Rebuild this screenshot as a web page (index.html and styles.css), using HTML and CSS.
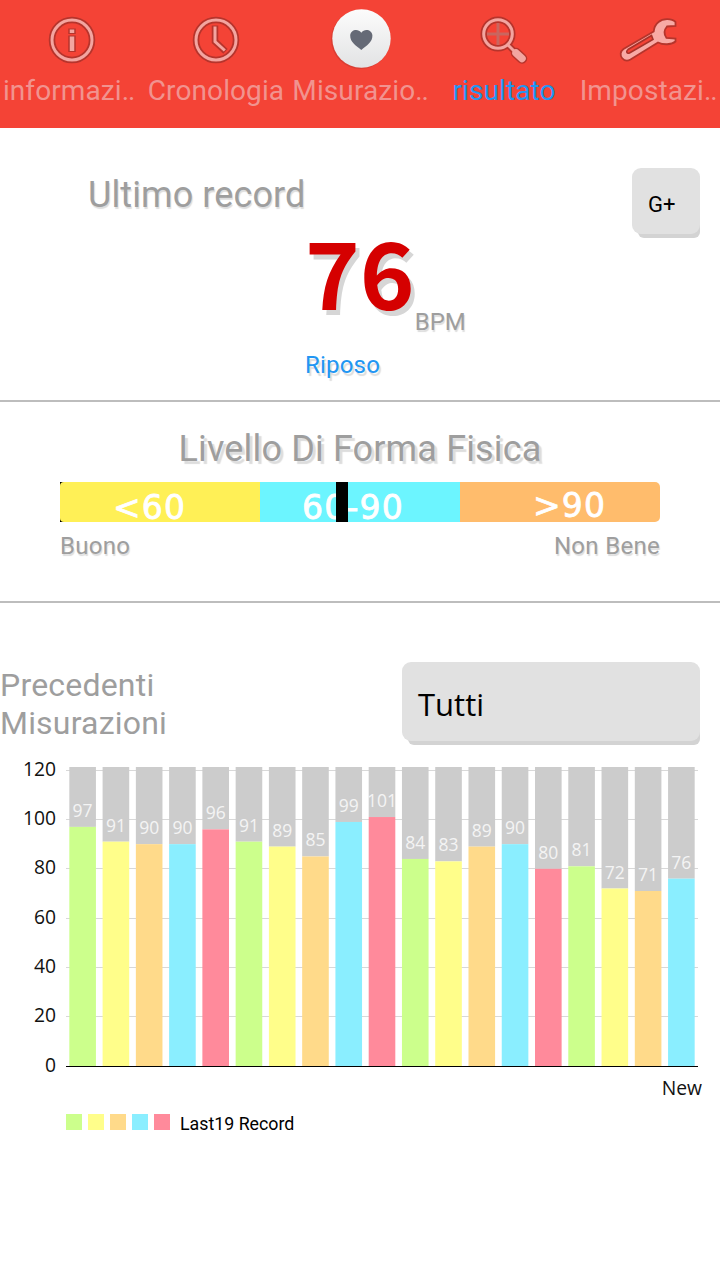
FILE: index.html
```
<!DOCTYPE html>
<html lang="it">
<head>
  <meta charset="UTF-8">
  <meta name="viewport" content="width=device-width, initial-scale=1.0">
  <title>Risultato</title>
  <link rel="stylesheet" href="styles.css">
</head>
<body>
  <nav class="tabs">
    <a class="tab">
      <svg class="icon" width="64" height="64" viewBox="0 0 64 64">
        <g class="edge"><circle cx="32" cy="32" r="20"/><path class="thick" d="M32 20.500v5.500M32 27.500v16.500"/></g>
        <g class="line"><circle cx="32" cy="32" r="20"/><path class="thick" d="M32 21.500v3.400M32 28.500v14.500"/></g>
      </svg>
      <span class="label first">informazi<span class="dots">..</span></span>
    </a>
    <a class="tab">
      <svg class="icon" width="64" height="64" viewBox="0 0 64 64">
        <g class="edge"><circle cx="32" cy="32" r="20"/><path d="M31 17.500v16l10.500 9.800"/></g>
        <g class="line"><circle cx="32" cy="32" r="20"/><path d="M31 18.500v15l9.800 9"/></g>
      </svg>
      <span class="label">Cronologia</span>
    </a>
    <a class="tab">
      <svg class="icon" width="64" height="64" viewBox="0 0 64 64">
        <defs>
          <linearGradient id="disc" x1="0" y1="0" x2="0" y2="1">
            <stop offset="0" stop-color="#fcfcfc"/>
            <stop offset="1" stop-color="#e2e3e4"/>
          </linearGradient>
        </defs>
        <circle cx="32.500" cy="31.500" r="29.500" fill="#c93a30" opacity=".6"/>
        <circle cx="33.500" cy="30.500" r="29.200" fill="url(#disc)"/>
        <path d="M33.300 42C28 37.500 22 34 22.200 27.500c.2-5.500 7.800-7.500 11.100-2.700 3.300-4.800 10.900-2.800 11.100 2.700.2 6.500-5.800 10-11.100 14.500z" fill="#656a76"/>
      </svg>
      <span class="label">Misurazio<span class="dots">..</span></span>
    </a>
    <a class="tab active">
      <svg class="icon" width="64" height="64" viewBox="0 0 64 64">
        <g class="edge"><circle cx="26" cy="26" r="14.300"/><path d="M36 37l5 5"/><path class="handle" d="M44 45l6 5.500"/></g>
        <path class="cross" d="M26 15v22M15 26h22"/>
        <g class="line"><circle cx="26" cy="26" r="14.300"/><path d="M36 37l6 6"/><path class="handle" d="M44 45l6 5.500"/></g>
      </svg>
      <span class="label">risultato</span>
    </a>
    <a class="tab">
      <svg class="icon" width="64" height="64" viewBox="0 0 64 64">
        <path class="wrench" d="M59.500 14C56 10.500 47 10 42.500 14c-3 2.500-4.500 6-4.800 9.500L7.500 41c-3.500 2.500-3.500 6.500-1.500 9s5 3.500 8.500 1.500L42 34.500c5 2.500 13.500 2.500 17.500-1V30.500l-9-.5c-2.500-3.500-2.500-8 .5-11.500l8.500-.5z"/>
        <path class="slot" d="M35.500 27.500L12 41.500c-2.500 2-1 4.500 1.500 3.500L37 31.500z"/>
      </svg>
      <span class="label">Impostazi<span class="dots">..</span></span>
    </a>
  </nav>

  <section class="record">
    <h2 class="record-title">Ultimo record</h2>
    <button class="button share">G+</button>
    <div class="reading">
      <span class="bpm">76</span>
      <span class="unit">BPM</span>
    </div>
    <div class="state">Riposo</div>
  </section>

  <section class="fitness">
    <h2 class="fitness-title">Livello Di Forma Fisica</h2>
    <div class="gauge">
      <div class="zone low">&lt;60</div>
      <div class="zone mid">60-90</div>
      <div class="zone high">&gt;90</div>
      <div class="marker"></div>
    </div>
    <div class="scale">
      <span>Buono</span>
      <span>Non Bene</span>
    </div>
  </section>

  <section class="history">
    <div class="history-head">
      <h2 class="history-title">Precedenti<br>Misurazioni</h2>
      <button class="button filter">Tutti</button>
    </div>
    <svg id="chart" class="chart" width="720" height="356" viewBox="0 0 720 356"></svg>
    <div class="legend">
      <i class="swatch green"></i>
      <i class="swatch yellow"></i>
      <i class="swatch orange"></i>
      <i class="swatch blue"></i>
      <i class="swatch pink"></i>
      <span class="legend-text">Last19 Record</span>
    </div>
  </section>
  <script src="chart.js"></script>
</body>
</html>
```
FILE: styles.css
```
body {
  margin: 0;
  background: #fff;
  color: #9e9e9e;
  font-family: Roboto, sans-serif;
}
h2 {
  margin: 0;
  font-weight: normal;
}

/* tabs */
.tabs {
  display: flex;
  height: 128px;
  background: #f44336;
}
.tab {
  display: flex;
  flex-direction: column;
  align-items: center;
  width: 144px;
  padding-top: 8px;
  box-sizing: border-box;
  color: #f1938f;
}
.tab.active {
  color: #2196f3;
}
.label {
  font-size: 28px;
  line-height: 38px;
  letter-spacing: .1px;
  white-space: nowrap;
}
.first {
  margin-right: 7px;
}
.dots {
  letter-spacing: -1.2px;
}
.icon {
  display: block;
  fill: none;
  stroke-linecap: butt;
}
.edge {
  stroke: #9c2f28;
  stroke-width: 6.5;
  opacity: .7;
}
.line {
  stroke: #f3a5a0;
  stroke-width: 3;
}
.edge .thick {
  stroke-width: 7.5;
}
.line .thick {
  stroke-width: 4.5;
}
.edge .handle {
  stroke-width: 10.5;
  stroke-linecap: round;
}
.line .handle {
  stroke-width: 7.5;
  stroke-linecap: round;
}
.cross {
  stroke: #c9665f;
  stroke-width: 3;
}
.wrench {
  fill: #f8aaa5;
  stroke: #b5352c;
  stroke-width: 1.8;
}
.slot {
  fill: #f44336;
  stroke: #a8322a;
  stroke-width: 1.6;
}

.button {
  padding: 0 16px;
  border: 0;
  border-radius: 9px;
  background: #e1e1e1;
  box-shadow: 3px 7px 0 -3px #d3d3d3;
  color: #000;
  font-family: Roboto, sans-serif;
  text-align: left;
}

/* last record */
.record {
  display: grid;
  grid-template-columns: 305px 1fr 68px;
  grid-template-rows: 70px 110px 34px;
  height: 272px;
  padding: 40px 20px 0 0;
  box-sizing: border-box;
}
.record-title {
  grid-column: 1 / 3;
  padding-left: 88px;
  font-size: 36px;
  line-height: 55px;
  letter-spacing: .1px;
  text-shadow: 1px 2px 1px #ddd;
}
.share {
  height: 66px;
  font-size: 22px;
  padding-top: 6px;
}
.reading {
  grid-column: 2;
  display: flex;
  align-items: flex-start;
}
.bpm {
  color: #d50000;
  font-family: "Noto Sans CJK JP", sans-serif;
  font-size: 93px;
  font-weight: bold;
  line-height: 63px;
  text-shadow: 4px 5px 0 #d6d6d6;
}
.unit {
  margin-top: 68px;
  font-size: 24px;
  line-height: 32px;
  text-shadow: 1px 2px 1px #ddd;
}
.state {
  grid-column: 2;
  color: #2196f3;
  font-size: 24px;
  line-height: 34px;
  letter-spacing: .2px;
  text-shadow: 2px 3px 1px #ddd;
}

/* fitness level */
.fitness {
  height: 203px;
  padding: 25px 60px 0;
  box-sizing: border-box;
  border-top: 2px solid #bdbdbd;
  border-bottom: 2px solid #bdbdbd;
}
.fitness-title {
  font-size: 36px;
  line-height: 44px;
  letter-spacing: .15px;
  text-align: center;
  text-shadow: 3px 3px 1px #ddd;
}
.gauge {
  position: relative;
  display: flex;
  height: 40px;
  margin-top: 11px;
  background: linear-gradient(to right, #000 10px, transparent 10px);
}
.zone {
  width: 200px;
  height: 40px;
  padding-top: 11px;
  box-sizing: border-box;
  color: #fff;
  font: 33px/30px "DejaVu Sans", sans-serif;
  letter-spacing: 1.2px;
  -webkit-text-stroke: .8px #fff;
}
.low {
  padding-left: 53px;
  background: #fff056;
  border-radius: 4px 0 0 4px;
}
.mid {
  padding-left: 42px;
  background: #6cf5ff;
}
.high {
  padding-top: 9px;
  padding-left: 73px;
  background: #ffbc6c;
  border-radius: 0 5px 5px 0;
}
/* sits over the zones at the current reading */
.marker {
  position: absolute;
  top: 0;
  left: 276px;
  width: 12px;
  height: 40px;
  background: #000;
}
.scale {
  display: flex;
  justify-content: space-between;
  font-size: 24px;
  line-height: 48px;
  letter-spacing: .3px;
  text-shadow: 1px 2px 1px #ddd;
}

/* history */
.history {
  padding-top: 59px;
}
.history-head {
  display: flex;
  justify-content: space-between;
  height: 90px;
  padding-right: 20px;
}
.history-title {
  padding-top: 4px;
  font-size: 32px;
  line-height: 38px;
  letter-spacing: .2px;
}
.filter {
  width: 298px;
  height: 79px;
  font-family: "Open Sans", sans-serif;
  font-size: 31px;
  padding-top: 4px;
}
.chart {
  display: block;
}
.grid {
  stroke: #d8d8d8;
}
.axis {
  stroke: #000;
}
.axis-text {
  fill: #111;
  font: 19.3px "Open Sans", sans-serif;
}
.bar-text {
  fill: #f4f4f4;
  font: 17.5px "Open Sans", sans-serif;
  text-anchor: middle;
}
.end {
  text-anchor: end;
}
.legend {
  display: flex;
  align-items: center;
  gap: 6px;
  height: 30px;
  padding-left: 66px;
}
.swatch {
  width: 16px;
  height: 16px;
  margin-top: -2px;
}
.green { background: #ccff8c; fill: #ccff8c; }
.yellow { background: #fffe8a; fill: #fffe8a; }
.orange { background: #ffda8a; fill: #ffda8a; }
.blue { background: #8aeeff; fill: #8aeeff; }
.pink { background: #ff8a9b; fill: #ff8a9b; }
.rest { fill: #ccc; }
.legend-text {
  margin-left: 4px;
  color: #000;
  font-size: 17.8px;
}
```
FILE: chart.js
```
const values = [97, 91, 90, 90, 96, 91, 89, 85, 99, 101, 84, 83, 89, 90, 80, 81, 72, 71, 76];
const colors = ["green", "yellow", "orange", "blue", "pink"];
const left = 66, right = 698, ceiling = 15, base = 314, unit = 2.465;
const step = (right - left) / values.length;
const svg = document.getElementById("chart");

function add(tag, attrs, text) {
  const el = document.createElementNS("http://www.w3.org/2000/svg", tag);
  for (const key in attrs) {
    el.setAttribute(key, attrs[key]);
  }
  if (text !== undefined) {
    el.textContent = text;
  }
  svg.appendChild(el);
}

for (let n = 0; n <= 120; n += 20) {
  const y = Math.floor(base - n * unit) + .5;
  add("line", { class: "grid", x1: left, x2: right, y1: y, y2: y });
  add("text", { class: "axis-text end", x: 56, y: y + 5.5 }, n);
}
values.forEach((value, i) => {
  const x = left + step * (i + .1);
  const y = base - value * unit;
  add("rect", { class: "rest", x: x, y: ceiling, width: step * .8, height: y - ceiling });
  add("rect", { class: colors[i % 5], x: x, y: y, width: step * .8, height: base - y });
  add("text", { class: "bar-text", x: x + step * .4, y: y - 10 }, value);
});
add("line", { class: "axis", x1: left, x2: right, y1: base + .5, y2: base + .5 });
add("text", { class: "axis-text end", x: 702, y: 343 }, "New");
```
